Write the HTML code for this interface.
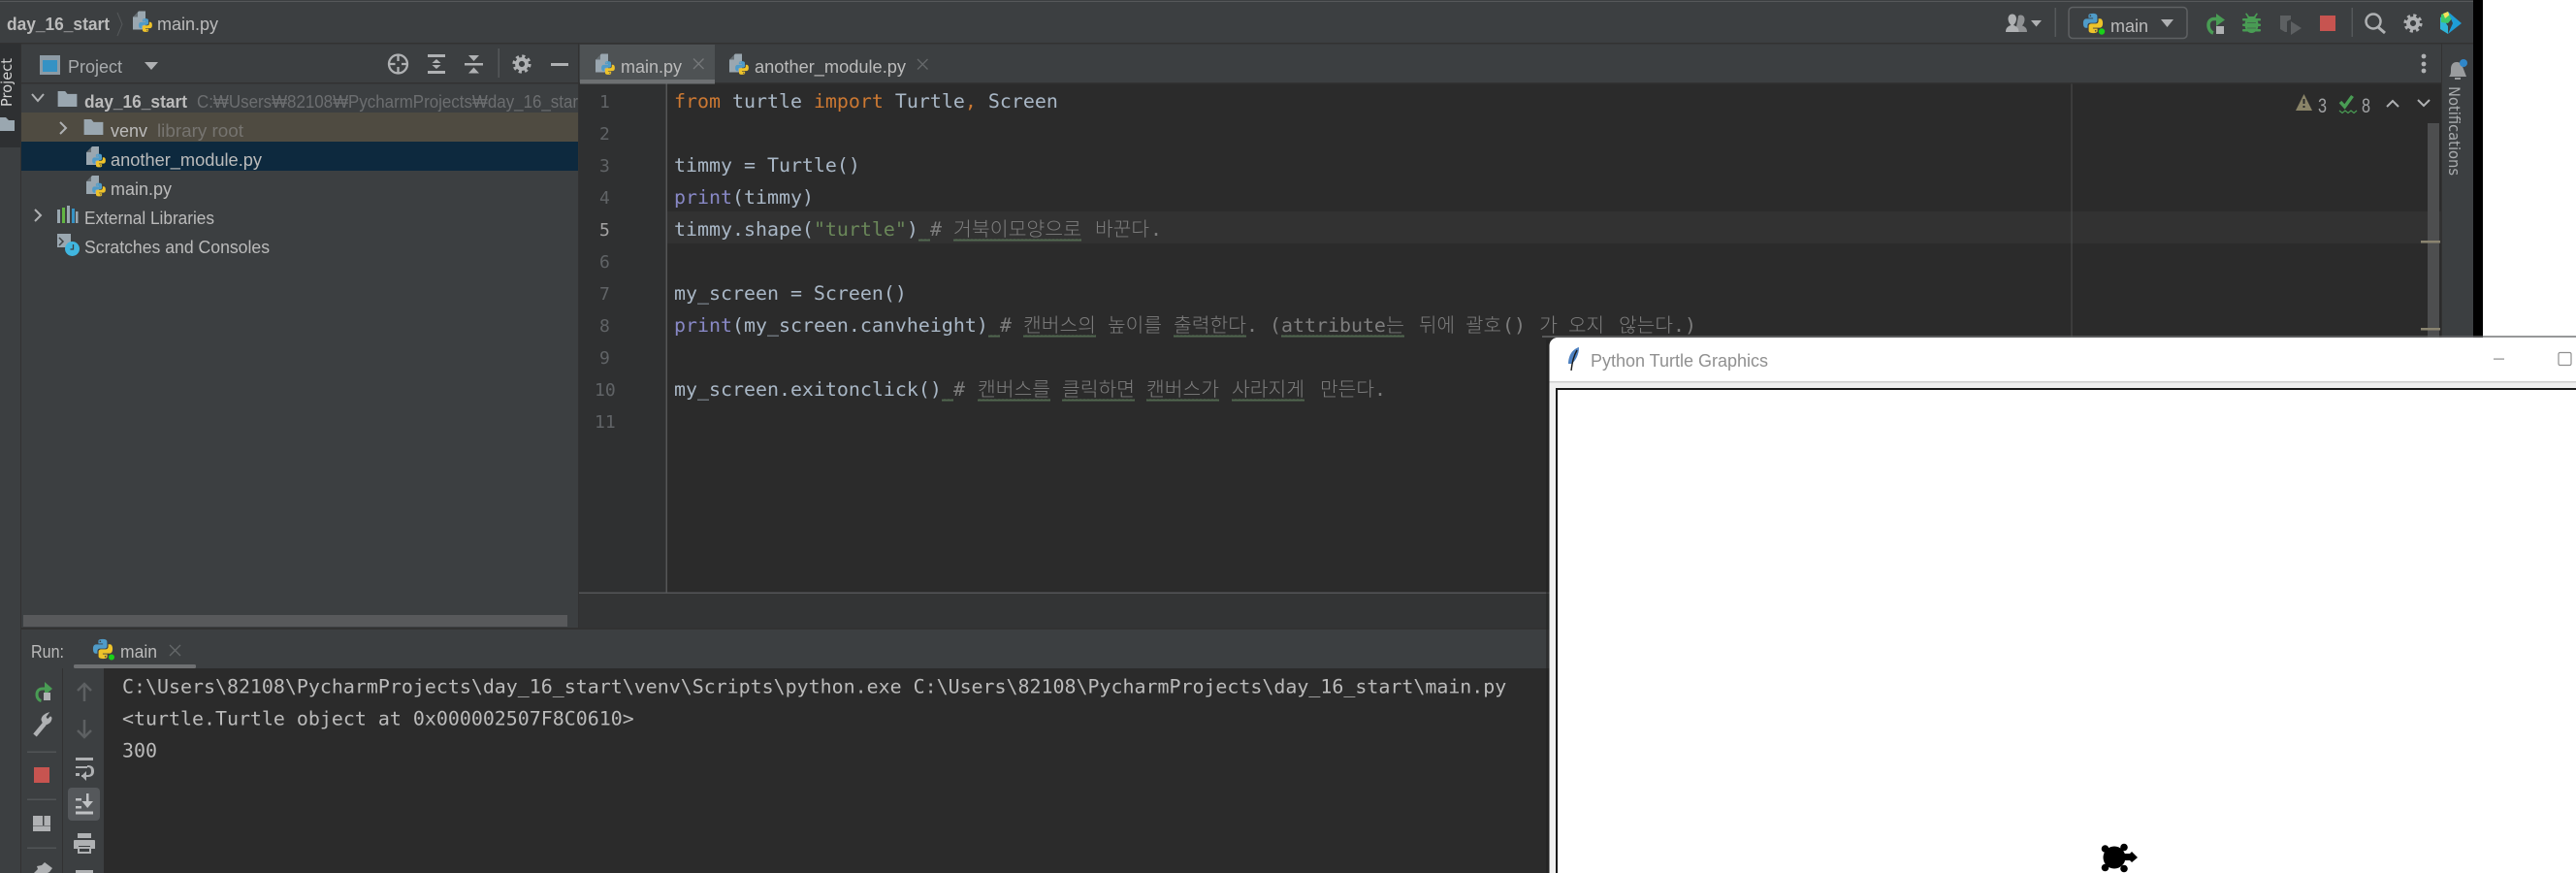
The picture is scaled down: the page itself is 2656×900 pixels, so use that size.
<!DOCTYPE html>
<html lang="ko"><head><meta charset="utf-8"><title>PyCharm</title>
<style>
html,body{margin:0;padding:0;background:#3c3f41;width:2656px;height:900px;overflow:hidden}
svg{display:block}
.ui{font-family:"Liberation Sans","Noto Sans CJK KR",sans-serif;font-size:18px;fill:#bbbbbb}
.m{font-family:"DejaVu Sans Mono","Liberation Mono",monospace;font-size:19.93px;fill:#a9b7c6;white-space:pre}
.k{fill:#cc7832}.b{fill:#8888c6}.s{fill:#6a8759}
.c{font-family:"DejaVu Sans Mono","Liberation Mono",monospace;font-size:19.93px;fill:#7d7d7d;white-space:pre}
.h{font-family:"Noto Sans CJK KR","Liberation Sans",sans-serif;font-size:20px;fill:#7d7d7d;font-weight:300}
.n{font-family:"DejaVu Sans Mono","Liberation Mono",monospace;font-size:18px;fill:#606366}
.o{font-family:"DejaVu Sans Mono","Liberation Mono",monospace;font-size:19.93px;fill:#bbbbbb;white-space:pre}
</style></head><body>
<svg xmlns="http://www.w3.org/2000/svg" width="2656" height="900" viewBox="0 0 2656 900">
<defs>
<symbol id="py" viewBox="0 0 24 24">
<path fill="#4f9bc8" d="M11.9 1C6.5 1 7 3.3 7 3.3V6h5.1v1H4.5S1 6.6 1 12s3 5.2 3 5.2h1.9v-2.6s-.1-3 3-3h5s2.9 0 2.9-2.8V3.9S17.3 1 11.9 1zM9.1 2.6a.9.9 0 1 1 0 1.8.9.9 0 0 1 0-1.8z"/>
<path fill="#eec32a" d="M12.1 23c5.4 0 4.9-2.3 4.9-2.3V18h-5.1v-1h7.6s3.5.4 3.5-5-3-5.2-3-5.2h-1.9v2.6s.1 3-3 3h-5s-2.9 0-2.9 2.8v4.9S6.7 23 12.1 23zm2.8-1.6a.9.9 0 1 1 0-1.8.9.9 0 0 1 0 1.8z"/>
</symbol>
<symbol id="pf" viewBox="0 0 21 22">
<path fill="#9aa7b0" d="M6 0h7v19H0V6zM5 1v5H0z"/>
<path fill="#3c3f41" d="M5 1L0 5.500V6h5z" opacity=".55"/>
<use href="#py" x="5" y="7" width="16" height="15"/>
</symbol>
<symbol id="gear" viewBox="0 0 24 24">
<circle cx="12" cy="12" r="9" fill="none" stroke="#afb1b3" stroke-width="5" stroke-dasharray="3.53 3.53"/>
<circle cx="12" cy="12" r="6" fill="none" stroke="#afb1b3" stroke-width="4.600"/>
</symbol>
<symbol id="fold" viewBox="0 0 21 17">
<path fill="#9aa7b0" d="M0 0h8l2.500 3H21v14H0z"/>
</symbol>
<pattern id="w" width="4" height="3" patternUnits="userSpaceOnUse">
<path d="M0 .5L1 2.500 2 .5 3 2.500 4 .5" fill="none" stroke="#5a7558" stroke-width=".8"/>
</pattern>
</defs>

<!-- base -->
<rect width="2656" height="900" fill="#3c3f41"/>
<rect x="0" y="1" width="2550" height="1" fill="#56585a"/>
<rect x="0" y="44" width="2550" height="1.500" fill="#323232"/>
<rect x="2550" y="0" width="10" height="348" fill="#000"/>
<rect x="2560" y="0" width="96" height="348" fill="#fff"/>

<!-- breadcrumb -->
<text class="ui" x="7" y="31" textLength="106" lengthAdjust="spacingAndGlyphs" font-weight="700" style="fill:#bbb">day_16_start</text>
<path d="M121 13l5 12-5 12" fill="none" stroke="#55585a" stroke-width="1"/>
<use href="#pf" x="137" y="11" width="21" height="23"/>
<text class="ui" x="162" y="31" textLength="63" lengthAdjust="spacingAndGlyphs">main.py</text>

<!-- toolbar right -->
<path fill="#8f9193" d="M2078 33h12c0-4-2-5.500-5-6.500 1.500-2 2.500-4 2.500-6.500 0-2.500-1.500-4.500-4-4.500-1 0-2 .3-2.500 1z"/>
<path fill="#afb1b3" d="M2068 33c0-4.500 2.500-6 5.500-7-1.800-2-3-4-3-6.500 0-3 1.800-5 4.300-5s4.200 2 4.200 5c0 2.500-1.200 4.500-3 6.500 3 1 5.500 2.500 5.500 7z"/>
<path fill="#afb1b3" d="M2094 21h11l-5.500 6.500z"/>
<rect x="2118.500" y="8" width="1.500" height="30" fill="#55585a"/>
<rect x="2133" y="7.500" width="122" height="32" rx="4" fill="none" stroke="#5e6163" stroke-width="1.500"/>
<use href="#py" x="2147" y="13" width="22" height="22"/>
<circle cx="2167" cy="32.500" r="3.200" fill="#19d119"/>
<text class="ui" x="2176" y="33" textLength="39" lengthAdjust="spacingAndGlyphs">main</text>
<path fill="#afb1b3" d="M2228 20h13l-6.500 8z"/>
<g>
<path d="M2289 19.500h-6c-4 0-6 3-6 6.500s2 7 5 8" fill="none" stroke="#499c54" stroke-width="3.500"/>
<path fill="#499c54" d="M2285 14l9 6.500-9 6.500z"/>
<rect x="2285" y="27" width="8" height="8" fill="#afb1b3"/>
</g>
<g fill="#499c54">
<ellipse cx="2321.500" cy="25.500" rx="7" ry="8.500"/>
<rect x="2312" y="19" width="19" height="2.500" rx="1"/><rect x="2312" y="24.500" width="19" height="2.500" rx="1"/><rect x="2312" y="30" width="19" height="2.500" rx="1"/>
<path d="M2315 14l1.500-.5 2.500 3.500h5l2.500-3.500 1.500.5-3 5h-7z"/>
</g>
<rect x="2317" y="23" width="9" height="1" fill="#3c3f41" opacity=".5"/><rect x="2317" y="28.500" width="9" height="1" fill="#3c3f41" opacity=".5"/>
<path fill="#5d6062" d="M2351 16h11v4l-4 2v11h-2l-5-3z"/>
<path fill="#5d6062" d="M2362 22l11 7-11 7z"/>
<rect x="2392" y="16" width="16" height="16" fill="#c75450"/>
<rect x="2424.500" y="8" width="1.500" height="30" fill="#55585a"/>
<circle cx="2447" cy="22" r="7.500" fill="none" stroke="#afb1b3" stroke-width="2.500"/>
<path d="M2452 28l7 6" stroke="#afb1b3" stroke-width="3" fill="none"/>
<use href="#gear" x="2478" y="14" width="20" height="20"/>
<path fill="#2fb5d8" d="M2516 18l8-5v8l-2 3 2 3v8l-8-5z"/>
<path fill="#3ec86a" d="M2517 15l7-3 5 6-5 6-7-1z"/>
<path fill="#f5e15a" d="M2519 14l5-2 2 3-5 4z"/>
<path fill="#1e9dd6" d="M2524 12l14 12-14 11 5-11z"/>

<!-- left strip -->
<rect x="0" y="45" width="21" height="107" fill="#2e3032"/>
<rect x="21" y="45" width="1" height="855" fill="#323232"/>
<text transform="translate(12 110) rotate(-90)" style="font-family:'DejaVu Sans',sans-serif;font-size:15.500px;fill:#d4d4d4" textLength="50" lengthAdjust="spacingAndGlyphs">Project</text>
<path fill="#9aa7b0" d="M0 121h6l3 3h6v11H0z"/>

<!-- project panel -->
<rect x="22" y="85" width="574" height="1.500" fill="#323232"/>
<rect x="41" y="57" width="21" height="20" fill="#8d9ba5"/>
<rect x="44" y="62" width="15" height="12" fill="#3592c4"/>
<text class="ui" x="70" y="75" textLength="56" lengthAdjust="spacingAndGlyphs" style="fill:#a8abad">Project</text>
<path fill="#afb1b3" d="M149 64h14l-7 8z"/>
<g fill="none" stroke="#afb1b3" stroke-width="2.300">
<circle cx="410.500" cy="66" r="9.500"/>
<path d="M410.500 56v7M410.500 69v7M400.500 66h7M414 66h7"/>
</g>
<g fill="#afb1b3">
<rect x="441" y="56" width="18" height="3"/><rect x="441" y="73" width="18" height="3"/>
<path d="M450 61l4.500 4h-9zM450 71l-4.500-4h9z"/>
<rect x="479" y="65" width="19" height="2.500"/>
<path d="M488.500 63l-5.500-6h11zM488.500 69.500l5.500 6h-11z"/>
</g>
<rect x="513.500" y="50" width="1.500" height="30" fill="#55585a"/>
<use href="#gear" x="528" y="56" width="20" height="20"/>
<rect x="568" y="65" width="18" height="3" fill="#afb1b3"/>

<rect x="22" y="116" width="574" height="30" fill="#4f4b41"/>
<rect x="22" y="146" width="574" height="30" fill="#0d293e"/>

<path d="M33 97l6 7 6-7" fill="none" stroke="#afb1b3" stroke-width="2"/>
<use href="#fold" x="59" y="94" width="21" height="16"/>
<text class="ui" x="87" y="111" textLength="106" lengthAdjust="spacingAndGlyphs" font-weight="700">day_16_start</text>
<text class="ui" x="203" y="111" textLength="393" lengthAdjust="spacingAndGlyphs" style="fill:#6c6e70">C:₩Users₩82108₩PycharmProjects₩day_16_star</text>
<path d="M62 126l6 6-6 6" fill="none" stroke="#afb1b3" stroke-width="2"/>
<use href="#fold" x="86" y="123" width="21" height="16"/>
<text class="ui" x="114" y="141" textLength="38" lengthAdjust="spacingAndGlyphs">venv</text>
<text class="ui" x="162" y="141" textLength="89" lengthAdjust="spacingAndGlyphs" style="fill:#767470">library root</text>
<use href="#pf" x="89" y="151" width="21" height="22"/>
<text class="ui" x="114" y="171" textLength="156" lengthAdjust="spacingAndGlyphs">another_module.py</text>
<use href="#pf" x="89" y="181" width="21" height="22"/>
<text class="ui" x="114" y="201" textLength="63" lengthAdjust="spacingAndGlyphs">main.py</text>
<path d="M36 216l6 6-6 6" fill="none" stroke="#afb1b3" stroke-width="2"/>
<rect x="59" y="216" width="3" height="14" fill="#9aa7b0"/><rect x="64" y="214" width="3" height="16" fill="#62b543"/><rect x="69" y="212" width="3" height="18" fill="#9aa7b0"/><rect x="74" y="215" width="3" height="15" fill="#3592c4"/><rect x="78" y="218" width="2.500" height="12" fill="#9aa7b0"/>
<text class="ui" x="87" y="231" textLength="134" lengthAdjust="spacingAndGlyphs">External Libraries</text>
<path fill="#9aa7b0" d="M59 241h14v14H59z"/>
<path d="M61 245l4 4-4 4" stroke="#3c3f41" stroke-width="1.500" fill="none"/>
<circle cx="74.500" cy="256.500" r="7.500" fill="#40b6e0"/>
<path d="M74.500 252v5h-3" stroke="#3c3f41" stroke-width="1.300" fill="none" transform="translate(1 0)"/>
<text class="ui" x="87" y="261" textLength="191" lengthAdjust="spacingAndGlyphs">Scratches and Consoles</text>
<rect x="24" y="634" width="561" height="12" fill="#58595b"/>
<rect x="596" y="45" width="1" height="603" fill="#323232"/>

<!-- tabs -->
<rect x="597" y="85" width="1920" height="1.500" fill="#323232"/>
<rect x="598" y="46" width="139" height="36" fill="#4e5254"/>
<rect x="598" y="82" width="139" height="5" fill="#6e7072"/>
<use href="#pf" x="614" y="55" width="21" height="23"/>
<text class="ui" x="640" y="75" textLength="63" lengthAdjust="spacingAndGlyphs">main.py</text>
<path d="M715 60.500l10.500 10.500M725.500 60.500L715 71" stroke="#75787a" stroke-width="1.300" fill="none"/>
<use href="#pf" x="752" y="55" width="21" height="23"/>
<text class="ui" x="778" y="75" textLength="156" lengthAdjust="spacingAndGlyphs">another_module.py</text>
<path d="M946 61l10.500 10.500M956.500 61L946 71.500" stroke="#65686a" stroke-width="1.300" fill="none"/>
<circle cx="2499" cy="58" r="2.400" fill="#afb1b3"/><circle cx="2499" cy="66" r="2.400" fill="#afb1b3"/><circle cx="2499" cy="73" r="2.400" fill="#afb1b3"/>

<!-- editor -->
<rect x="597" y="86.500" width="90" height="524" fill="#2f3031"/>
<rect x="687" y="86.500" width="1830" height="524" fill="#2b2b2b"/>
<rect x="688" y="218" width="1829" height="33" fill="#323232"/>
<rect x="686.500" y="86.500" width="1.500" height="524" fill="#555658"/>
<rect x="2135.500" y="86.500" width="1" height="524" fill="#4c4d4e"/>
<rect x="597" y="610.500" width="1001" height="1.500" fill="#555658"/>
<rect x="597" y="612" width="1001" height="35" fill="#333435"/>

<g class="n">
<text x="618" y="111">1</text><text x="618" y="144">2</text><text x="618" y="177">3</text><text x="618" y="210">4</text>
<text x="618" y="243" style="fill:#a4a3a3">5</text><text x="618" y="276">6</text><text x="618" y="309">7</text><text x="618" y="342">8</text>
<text x="618" y="375">9</text><text x="613" y="408">10</text><text x="613" y="441">11</text>
</g>

<text class="m" x="695" y="111" xml:space="preserve"><tspan class="k">from</tspan> turtle <tspan class="k">import</tspan> Turtle<tspan class="k">,</tspan> Screen</text>
<text class="m" x="695" y="177" xml:space="preserve">timmy = Turtle()</text>
<text class="m" x="695" y="210" xml:space="preserve"><tspan class="b">print</tspan>(timmy)</text>
<text class="m" x="695" y="243" xml:space="preserve">timmy.shape(<tspan class="s">"turtle"</tspan>)</text>
<rect x="947" y="246" width="12" height="3" fill="url(#w)"/>
<text class="c" x="959" y="243">#</text>
<text class="h" x="983" y="243" textLength="132" lengthAdjust="spacingAndGlyphs">거북이모양으로</text>
<rect x="983" y="246" width="132" height="3" fill="url(#w)"/>
<text class="h" x="1129" y="243" textLength="56" lengthAdjust="spacingAndGlyphs">바꾼다</text>
<text class="c" x="1186" y="243">.</text>

<text class="m" x="695" y="309" xml:space="preserve">my_screen = Screen()</text>
<text class="m" x="695" y="342" xml:space="preserve"><tspan class="b">print</tspan>(my_screen.canvheight)</text>
<rect x="1019" y="345" width="12" height="3" fill="url(#w)"/>
<text class="c" x="1031" y="342">#</text>
<text class="h" x="1055" y="342" textLength="75" lengthAdjust="spacingAndGlyphs">캔버스의</text>
<rect x="1055" y="345" width="75" height="3" fill="url(#w)"/>
<text class="h" x="1142" y="342" textLength="56" lengthAdjust="spacingAndGlyphs">높이를</text>
<text class="h" x="1210" y="342" textLength="75" lengthAdjust="spacingAndGlyphs">출력한다</text>
<rect x="1210" y="345" width="75" height="3" fill="url(#w)"/>
<text class="c" x="1285" y="342" xml:space="preserve">. (attribute</text>
<text class="h" x="1429" y="342" textLength="19" lengthAdjust="spacingAndGlyphs">는</text>
<rect x="1321" y="345" width="127" height="3" fill="url(#w)"/>
<text class="h" x="1463" y="342" textLength="37" lengthAdjust="spacingAndGlyphs">뒤에</text>
<text class="h" x="1511" y="342" textLength="37" lengthAdjust="spacingAndGlyphs">괄호</text>
<text class="c" x="1549" y="342">()</text>
<text class="h" x="1587" y="342" textLength="19" lengthAdjust="spacingAndGlyphs">가</text>
<text class="h" x="1617" y="342" textLength="37" lengthAdjust="spacingAndGlyphs">오지</text>
<text class="h" x="1669" y="342" textLength="56" lengthAdjust="spacingAndGlyphs">않는다</text>
<text class="c" x="1725" y="342">.)</text>

<text class="m" x="695" y="408" xml:space="preserve">my_screen.exitonclick()</text>
<rect x="971" y="411" width="12" height="3" fill="url(#w)"/>
<text class="c" x="983" y="408">#</text>
<text class="h" x="1008" y="408" textLength="75" lengthAdjust="spacingAndGlyphs">캔버스를</text>
<rect x="1008" y="411" width="75" height="3" fill="url(#w)"/>
<text class="h" x="1095" y="408" textLength="75" lengthAdjust="spacingAndGlyphs">클릭하면</text>
<rect x="1095" y="411" width="75" height="3" fill="url(#w)"/>
<text class="h" x="1182" y="408" textLength="75" lengthAdjust="spacingAndGlyphs">캔버스가</text>
<rect x="1182" y="411" width="75" height="3" fill="url(#w)"/>
<text class="h" x="1270" y="408" textLength="75" lengthAdjust="spacingAndGlyphs">사라지게</text>
<rect x="1270" y="411" width="75" height="3" fill="url(#w)"/>
<text class="h" x="1361" y="408" textLength="56" lengthAdjust="spacingAndGlyphs">만든다</text>
<text class="c" x="1417" y="408">.</text>

<!-- inspection widget -->
<path fill="#8a8468" d="M2375.500 97l8.500 17h-17z"/>
<rect x="2374.500" y="102" width="2" height="5" fill="#2b2b2b"/><rect x="2374.500" y="109" width="2" height="2" fill="#2b2b2b"/>
<text class="ui" x="2390" y="116" textLength="9" lengthAdjust="spacingAndGlyphs" style="font-size:21px;fill:#a0a2a4">3</text>
<path d="M2413 105l4.500 5 8-11" fill="none" stroke="#499c54" stroke-width="3.500"/>
<path d="M2412 114l3 2.500 3-2.500 3 2.500 3-2.500 3 2.500 3-2.500" fill="none" stroke="#499c54" stroke-width="1.200"/>
<text class="ui" x="2435" y="116" textLength="9" lengthAdjust="spacingAndGlyphs" style="font-size:21px;fill:#a0a2a4">8</text>
<path d="M2461 110l6-6 6 6M2493 103l6 6 6-6" fill="none" stroke="#afb1b3" stroke-width="2"/>
<rect x="2503" y="127" width="12" height="483" fill="#4d4e4f"/>
<rect x="2496" y="248" width="20" height="2.500" fill="#8a8470"/>
<rect x="2496" y="338" width="20" height="2.500" fill="#8a8470"/>

<!-- notifications strip -->
<rect x="2517" y="45" width="1" height="303" fill="#323232"/>
<path fill="#9a9c9e" d="M2525 79c2-2 2-4 2-8 0-4 2-7 6-7 2 0 4 1 5 2l5 13z"/>
<rect x="2531" y="80" width="6" height="2" fill="#9a9c9e"/>
<circle cx="2540" cy="65" r="4" fill="#2f86c8"/>
<text transform="translate(2525 89) rotate(90)" style="font-family:'DejaVu Sans',sans-serif;font-size:16px;fill:#a8abad" textLength="92" lengthAdjust="spacingAndGlyphs">Notifications</text>

<!-- run panel -->
<rect x="22" y="647" width="1576" height="2" fill="#323232"/>
<text class="ui" x="32" y="678" textLength="34" lengthAdjust="spacingAndGlyphs">Run:</text>
<use href="#py" x="95" y="658" width="22" height="22"/>
<circle cx="115" cy="677.500" r="3" fill="#19d119"/>
<text class="ui" x="124" y="678" textLength="38" lengthAdjust="spacingAndGlyphs">main</text>
<path d="M175 665l11 11M186 665l-11 11" stroke="#65686a" stroke-width="1.300" fill="none"/>
<rect x="76" y="685" width="126" height="4" rx="1.500" fill="#6e7072"/>
<rect x="107" y="689" width="1491" height="211" fill="#2b2b2b"/>
<rect x="64" y="689" width="1" height="211" fill="#323232"/>
<text class="o" x="126" y="714.500">C:\Users\82108\PycharmProjects\day_16_start\venv\Scripts\python.exe C:\Users\82108\PycharmProjects\day_16_start\main.py</text>
<text class="o" x="126" y="747.500">&lt;turtle.Turtle object at 0x000002507F8C0610&gt;</text>
<text class="o" x="126" y="780.500">300</text>

<!-- run toolbar col 1 -->
<path d="M50 710h-6c-4 0-6 2.500-6 6s2 6 4.500 6.500" fill="none" stroke="#499c54" stroke-width="3"/>
<path fill="#499c54" d="M46 703l8 7-8 7z"/>
<rect x="45" y="714" width="7" height="8" fill="#afb1b3"/>
<path d="M36 758l10-12" stroke="#afb1b3" stroke-width="4.500"/>
<path d="M53 740c0 4-3 7-8 7l-2-5c0-3 3-6 7-7l-3 4 2 3 3-3z" fill="#afb1b3" stroke="#afb1b3"/>
<rect x="28" y="774.500" width="30" height="1.500" fill="#515456"/>
<rect x="35" y="791" width="16" height="16" fill="#c75450"/>
<rect x="28" y="823.500" width="30" height="1.500" fill="#515456"/>
<rect x="34" y="841" width="10" height="10" fill="#afb1b3"/><rect x="45.500" y="841" width="6.500" height="10" fill="#afb1b3"/><rect x="34" y="851.500" width="18" height="5.500" fill="#afb1b3"/>
<rect x="28" y="873.500" width="30" height="1.500" fill="#515456"/>
<path fill="#afb1b3" d="M46 889l8 6-3 4-2 1h-14l4-4-1-3 5-1z"/>

<!-- run toolbar col 2 -->
<g fill="none" stroke="#5d6062" stroke-width="2.500">
<path d="M87 723v-18M80 712l7-7 7 7"/>
<path d="M87 742v18M80 753l7 7 7-7"/>
</g>
<g fill="#afb1b3">
<rect x="78" y="781" width="18" height="3"/>
<rect x="78" y="790" width="12" height="2"/><rect x="78" y="797" width="4" height="3"/>
<path d="M84 799h6c3 0 4-1 4-4s-1-4-4-4v-2c5 0 7 2 7 6s-2 6-7 6h-6z"/>
<path d="M89 795v10l-5-5z"/>
</g>
<rect x="70" y="812" width="33" height="34" rx="4" fill="#55585b"/>
<g fill="#bfc1c3">
<rect x="78" y="823" width="6" height="2.500"/><rect x="78" y="831" width="6" height="2.500"/>
<rect x="78" y="836.500" width="18" height="3"/>
<rect x="89" y="818" width="2.500" height="10"/>
<path d="M84.500 826h11.500l-5.800 7z"/>
</g>
<g fill="#afb1b3">
<rect x="80" y="859" width="14" height="5"/>
<path d="M77 866h20c1 0 1 1 1 1v8h-5v-3H81v3h-5v-8s0-1 1-1z"/>
<path d="M80 873h14v7H80zm2 2v3h10v-3z" fill-rule="evenodd"/>
<rect x="78" y="897" width="18" height="3"/>
</g>

<!-- Turtle window -->
<rect x="1590" y="346" width="1066" height="2" fill="#6b6c6d" opacity=".7"/>
<rect x="1594" y="350" width="4" height="550" fill="#1f1f1f" opacity=".5"/>
<path d="M1606 348H2656V900H1597.500V356.500a8.500 8.500 0 0 1 8.500-8.500z" fill="#ffffff"/>
<path fill="#4d80c0" d="M1628 358c-7 2-11 9-11 17l3 0c5-3 8-10 8-17z"/>
<path d="M1626 361c-3 5-5 12-6 21" stroke="#1a1a1a" stroke-width="1.400" fill="none"/>
<text class="ui" x="1640" y="378" textLength="183" lengthAdjust="spacingAndGlyphs" style="fill:#909090">Python Turtle Graphics</text>
<rect x="2571" y="369.500" width="11" height="1.200" fill="#8f8f8f"/>
<rect x="2638" y="363.500" width="13" height="13" rx="1.500" fill="none" stroke="#8f8f8f" stroke-width="1.200"/>
<rect x="1597.500" y="393" width="1059" height="1.500" fill="#cfcfcf"/>
<rect x="1597.500" y="394.500" width="1059" height="505.500" fill="#f0f0f0"/>
<rect x="1604" y="400" width="1052" height="500" fill="#1a1a1a"/>
<rect x="1606" y="402" width="1050" height="498" fill="#ffffff"/>
<g fill="#000">
<circle cx="2180" cy="884" r="11.500"/>
<circle cx="2170.500" cy="875" r="3.800"/><circle cx="2190" cy="873.500" r="3.800"/>
<circle cx="2170.500" cy="894.500" r="3.800"/><circle cx="2190" cy="895.500" r="3.800"/>
<path d="M2190 880h6l2-2 6 6-6 5-2-2h-6z"/>
</g>
</svg>
</body></html>
